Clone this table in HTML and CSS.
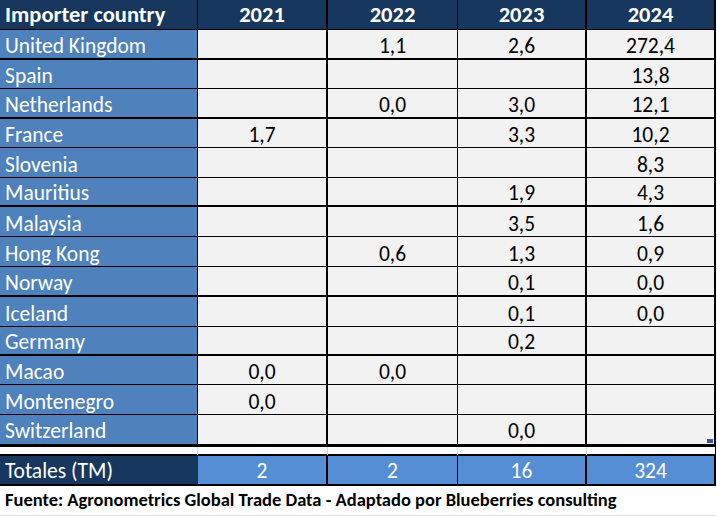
FILE: index.html
```html
<!DOCTYPE html>
<html lang="en">
<head>
<meta charset="utf-8">
<title>Importer country</title>
<link rel="stylesheet" href="styles.css">
</head>
<body>
<div class="sheet">
  <div class="row head">
    <div class="cell name">Importer country</div>
    <div class="cell">2021</div>
    <div class="cell">2022</div>
    <div class="cell">2023</div>
    <div class="cell">2024</div>
  </div>
  <div class="row h30 thick">
    <div class="cell name">United Kingdom</div>
    <div class="cell"></div><div class="cell">1,1</div><div class="cell">2,6</div><div class="cell">272,4</div>
  </div>
  <div class="row h29">
    <div class="cell name">Spain</div>
    <div class="cell"></div><div class="cell"></div><div class="cell"></div><div class="cell">13,8</div>
  </div>
  <div class="row h30 thick">
    <div class="cell name">Netherlands</div>
    <div class="cell"></div><div class="cell">0,0</div><div class="cell">3,0</div><div class="cell">12,1</div>
  </div>
  <div class="row h29">
    <div class="cell name">France</div>
    <div class="cell">1,7</div><div class="cell"></div><div class="cell">3,3</div><div class="cell">10,2</div>
  </div>
  <div class="row h30">
    <div class="cell name">Slovenia</div>
    <div class="cell"></div><div class="cell"></div><div class="cell"></div><div class="cell">8,3</div>
  </div>
  <div class="row h29 thick">
    <div class="cell name">Mauritius</div>
    <div class="cell"></div><div class="cell"></div><div class="cell">1,9</div><div class="cell">4,3</div>
  </div>
  <div class="row h30">
    <div class="cell name">Malaysia</div>
    <div class="cell"></div><div class="cell"></div><div class="cell">3,5</div><div class="cell">1,6</div>
  </div>
  <div class="row h30">
    <div class="cell name">Hong Kong</div>
    <div class="cell"></div><div class="cell">0,6</div><div class="cell">1,3</div><div class="cell">0,9</div>
  </div>
  <div class="row h30 thick">
    <div class="cell name">Norway</div>
    <div class="cell"></div><div class="cell"></div><div class="cell">0,1</div><div class="cell">0,0</div>
  </div>
  <div class="row h30">
    <div class="cell name">Iceland</div>
    <div class="cell"></div><div class="cell"></div><div class="cell">0,1</div><div class="cell">0,0</div>
  </div>
  <div class="row h29 thick">
    <div class="cell name">Germany</div>
    <div class="cell"></div><div class="cell"></div><div class="cell">0,2</div><div class="cell"></div>
  </div>
  <div class="row h29">
    <div class="cell name">Macao</div>
    <div class="cell">0,0</div><div class="cell">0,0</div><div class="cell"></div><div class="cell"></div>
  </div>
  <div class="row h30">
    <div class="cell name">Montenegro</div>
    <div class="cell">0,0</div><div class="cell"></div><div class="cell"></div><div class="cell"></div>
  </div>
  <div class="row last">
    <div class="cell name">Switzerland</div>
    <div class="cell"></div><div class="cell"></div><div class="cell">0,0</div><div class="cell handle-cell"><span class="handle"></span></div>
  </div>
  <div class="row gap">
    <div class="cell"></div><div class="cell"></div><div class="cell"></div><div class="cell"></div><div class="cell"></div>
  </div>
  <div class="row totals">
    <div class="cell name">Totales (TM)</div>
    <div class="cell">2</div>
    <div class="cell">2</div>
    <div class="cell">16</div>
    <div class="cell">324</div>
  </div>
  <div class="source">Fuente: Agronometrics Global Trade Data - Adaptado por Blueberries consulting</div>
</div>
</body>
</html>
```

FILE: styles.css
```css
* { box-sizing: border-box; }

html, body {
  margin: 0;
  padding: 0;
  background: #ffffff;
}

body {
  font-family: "Carlito", "Lato", "Liberation Sans", sans-serif;
  font-size: 21.5px;
  color: #000000;
  width: 717px;
  height: 517px;
  overflow: hidden;
}

.sheet {
  display: flex;
  flex-direction: column;
  width: 716px;
}

.row {
  display: grid;
  grid-template-columns: 198px 130px 130px 129px 129px;
  height: 30px;
}

.h29 { height: 29px; }
.h30 { height: 30px; }

.cell {
  background: #f2f2f2;
  border-right: 1px solid #000;
  border-bottom: 1px solid #000;
  text-align: center;
  display: flex;
  align-items: flex-end;
  justify-content: center;
  padding-bottom: 1.5px;
  line-height: 22px;
  white-space: nowrap;
}

.cell:nth-child(2),
.cell:nth-child(4),
.cell:nth-child(5) {
  border-right-width: 2px;
}

.thick .cell { border-bottom-width: 2px; padding-bottom: 1px; }

.cell.name {
  background: #4f81bd;
  color: #ffffff;
  justify-content: flex-start;
  padding-left: 5px;
}

.head .cell {
  background: #17375e;
  color: #ffffff;
  font-weight: bold;
  font-size: 22.5px;
  padding-bottom: 3px;
}

.head .cell.name { background: #17375e; }

.last { height: 32px; }
.last .cell { border-bottom-width: 3px; padding-bottom: 2px; }

.handle-cell { position: relative; }

.handle {
  position: absolute;
  right: 1px;
  bottom: 1px;
  width: 6px;
  height: 4px;
  background: #3f51a8;
}

.gap { height: 9px; }
.gap .cell {
  background: #ffffff;
  border-bottom: 2px solid #000;
  border-right: 1px solid #d9d9d9;
}
.gap .cell:nth-child(5) { border-right-color: #000; }

.totals { height: 30px; }
.totals .cell {
  background: #558ed5;
  color: #ffffff;
  border-bottom: 2px solid #000;
  padding-bottom: 2px;
}
.totals .cell.name {
  background: #17375e;
  border-right-color: #17375e;
}

.source {
  height: 30px;
  font-weight: bold;
  font-size: 18.5px;
  padding-left: 5px;
  line-height: 28px;
  border-bottom: 1px solid #dcdcdc;
  white-space: nowrap;
}
```
